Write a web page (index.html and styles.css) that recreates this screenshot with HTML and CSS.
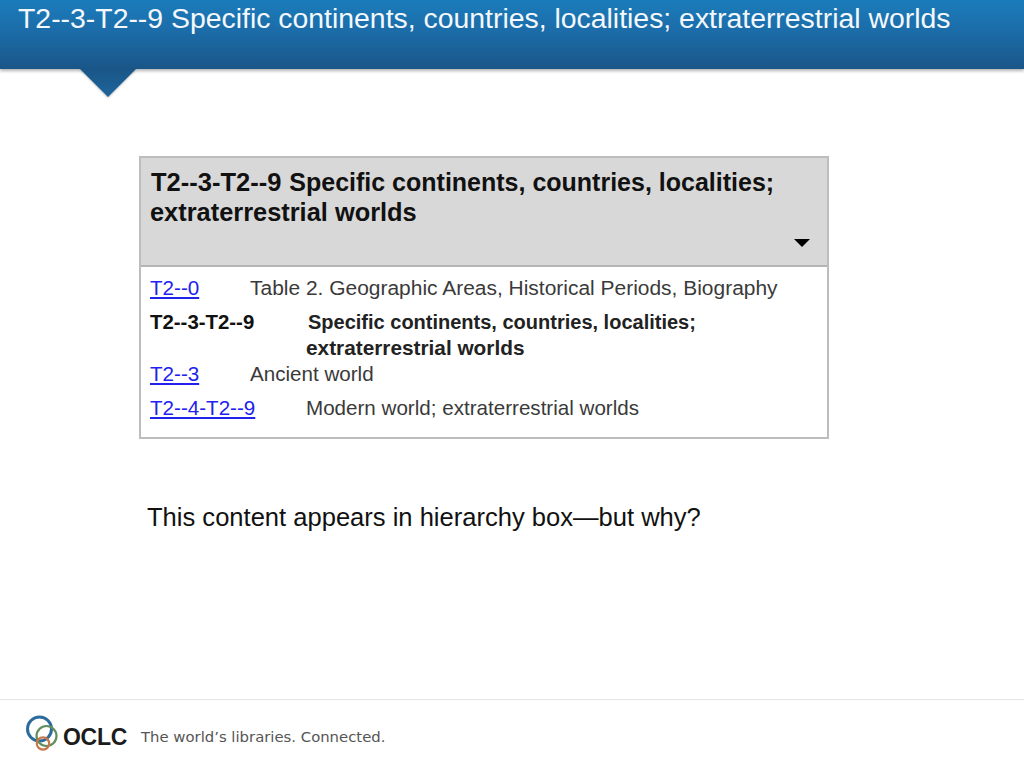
FILE: index.html
```html
<!DOCTYPE html>
<html lang="en">
<head>
<meta charset="utf-8">
<title>T2--3-T2--9</title>
<link rel="stylesheet" href="styles.css">
</head>
<body>
<header class="banner">
  <h1 class="banner-title">T2--3-T2--9 Specific continents, countries, localities; extraterrestrial worlds</h1>
  <svg class="notch" width="56" height="29" viewBox="0 0 56 29"><defs><linearGradient id="ng" x1="0" y1="0" x2="0" y2="1"><stop offset="0" stop-color="#1a5688"/><stop offset="1" stop-color="#1e659c"/></linearGradient></defs><path d="M0 0H56L28 28Z" fill="url(#ng)"/></svg>
</header>
<main class="content">
  <section class="hier">
    <div class="hier-head">
      <h2 class="hier-title"><span class="hier-num">T2--3-T2--9</span> Specific continents, countries, localities; <span class="hier-second">extraterrestrial worlds</span></h2>
      <span class="caret"></span>
    </div>
    <div class="hier-body">
      <div class="row row-a"><a class="code code-s" href="#">T2--0</a><span class="desc desc-wide">Table 2. Geographic Areas, Historical Periods, Biography</span></div>
      <div class="row row-b"><span class="code code-l cur">T2--3-T2--9</span><span class="desc cur cur-desc">Specific continents, countries, localities;<br><span class="cur-2">extraterrestrial worlds</span></span></div>
      <div class="row row-c"><a class="code code-s" href="#">T2--3</a><span class="desc">Ancient world</span></div>
      <div class="row row-d"><a class="code code-l" href="#">T2--4-T2--9</a><span class="desc">Modern world; extraterrestrial worlds</span></div>
    </div>
  </section>
  <p class="note">This content appears in hierarchy box—but why?</p>
</main>
<footer class="foot">
  <div class="logo">
    <svg class="rings" width="34" height="36" viewBox="0 0 34 36" fill="none"><circle cx="14.500" cy="14" r="12" stroke="#2c6c9c" stroke-width="3"/><circle cx="21.500" cy="21" r="10" stroke="#5f8f5a" stroke-width="2.200"/><circle cx="18" cy="28.500" r="6.200" stroke="#c9774a" stroke-width="2.200"/></svg>
    <span class="logo-word">OCLC</span>
  </div>
  <span class="tagline">The world’s libraries. Connected.</span>
</footer>
</body>
</html>
```
FILE: styles.css
```css
html, body { margin: 0; padding: 0; }
body {
  width: 1024px;
  height: 768px;
  overflow: hidden;
  display: flex;
  flex-direction: column;
  background: #fff;
  font-family: "Liberation Sans", Arial, sans-serif;
}
.banner {
  position: relative;
  height: 69px;
  flex: none;
  background: linear-gradient(#1b7cbb 0%, #1b6ca8 45%, #1a5688 100%);
  box-shadow: 0 2px 3px rgba(0,0,0,.3);
}
.banner-title {
  margin: 0;
  padding: 3px 0 0 18px;
  font-size: 28.400px;
  line-height: 30px;
  font-weight: 400;
  color: #f4f8fc;
  white-space: nowrap;
}
.notch {
  position: absolute;
  left: 80px;
  top: 69px;
  filter: drop-shadow(0 1px 1px rgba(0,0,0,.25));
}
.content { flex: 1; padding: 87px 0 0 139px; }
.hier {
  width: 690px;
  height: 283px;
  box-sizing: border-box;
  border: 2px solid #bdbdbd;
}
.hier-head {
  height: 109px;
  box-sizing: border-box;
  background: #d8d8d8;
  border-bottom: 2px solid #b5b5b5;
  display: flex;
  flex-direction: column;
  padding: 9px 17px 0 9px;
}
.hier-title {
  margin: 0;
  font-size: 25px;
  line-height: 30px;
  font-weight: 700;
  color: #111;
  flex: 1;
}
.hier-num { margin-left: 1px; margin-right: 1px; font-size: 25.500px; }
.hier-second { display: block; font-size: 25.400px; }
.caret {
  align-self: flex-end;
  width: 0;
  height: 0;
  border-left: 8px solid transparent;
  border-right: 8px solid transparent;
  border-top: 8px solid #000;
  margin-bottom: 18px;
}
.hier-body { padding: 0 9px; font-size: 20.600px; color: #333; }
.row { display: flex; line-height: 26px; }
.row-a { margin-top: 8px; }
.row-b { margin-top: 8px; }
.row-c { margin-top: 0; }
.row-d { margin-top: 8px; }
.code { flex: none; color: #2222ee; }
.code-s { width: 100px; }
.code-l { width: 156px; }
.code.cur { font-weight: 700; font-size: 20.400px; color: #111; }
.desc { color: #3a3a3a; }
.desc-wide { font-size: 20.960px; }
.desc.cur { color: #222; font-weight: 700; font-size: 20px; }
.cur-desc { margin-left: 2px; }
.cur-2 { margin-left: -2px; font-size: 20.800px; }
.note {
  margin: 63px 0 0 8px;
  font-size: 25.550px;
  line-height: 30px;
  color: #111;
}
.foot {
  flex: none;
  height: 68px;
  border-top: 1px solid #e6e6e6;
  display: flex;
  align-items: flex-start;
  padding-left: 25px;
}
.logo { display: flex; align-items: flex-start; margin-top: 15px; width: 116px; }
.rings { flex: none; }
.logo-word {
  font-size: 23px;
  line-height: 24px;
  font-weight: 700;
  color: #1c1c1c;
  margin: 10px 0 0 4px;
  letter-spacing: -.3px;
}
.tagline {
  margin-top: 27px;
  font-family: "DejaVu Sans", sans-serif;
  font-size: 14.850px;
  line-height: 20px;
  color: #555;
  white-space: nowrap;
}
```
